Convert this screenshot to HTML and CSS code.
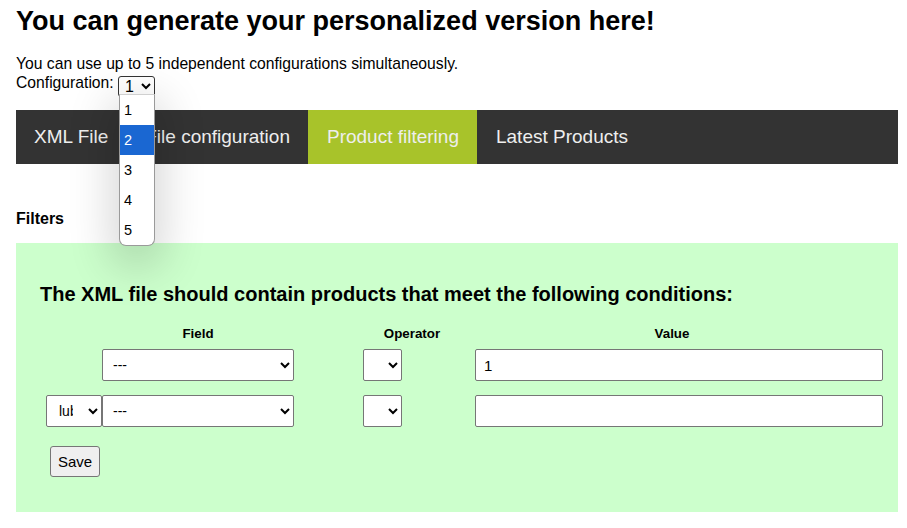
FILE: index.html
```html
<!DOCTYPE html>
<html lang="en">
<head>
  <meta charset="UTF-8" />
  <title>Personalized XML</title>
  <link rel="stylesheet" href="styles.css">
</head>
<body>
  <div class="page">
    <h1 class="title">You can generate your personalized version here!</h1>

    <div class="intro">
      You can use up to 5 independent configurations simultaneously.<br>
      Configuration:
      <span class="config-picker">
        <select class="config-select">
          <option>1</option>
          <option>2</option>
          <option>3</option>
          <option>4</option>
          <option>5</option>
        </select>
        <!-- the open option list of the select -->
        <span class="config-list">
          <span class="opt">1</span>
          <span class="opt active">2</span>
          <span class="opt">3</span>
          <span class="opt">4</span>
          <span class="opt">5</span>
        </span>
      </span>
    </div>

    <ul class="tabs">
      <li>XML File</li>
      <li>File configuration</li>
      <li class="current">Product filtering</li>
      <li>Latest Products</li>
    </ul>

    <h4 class="section-label">Filters</h4>

    <div class="filter-panel">
      <h3 class="filter-title">The XML file should contain products that meet the following conditions:</h3>

      <div class="filter-grid">
        <div class="head col-field">Field</div>
        <div class="head col-op">Operator</div>
        <div class="head col-value">Value</div>

        <div class="col-join"></div>
        <div class="col-field">
          <select class="field-select"><option>---</option></select>
        </div>
        <div class="col-op">
          <select class="op-select"><option></option></select>
        </div>
        <div class="col-value">
          <input class="value-input" type="text" value="1">
        </div>

        <div class="col-join">
          <select class="join-select"><option>lub</option></select>
        </div>
        <div class="col-field">
          <select class="field-select"><option>---</option></select>
        </div>
        <div class="col-op">
          <select class="op-select"><option></option></select>
        </div>
        <div class="col-value">
          <input class="value-input" type="text" value="">
        </div>
      </div>

      <button class="save-btn">Save</button>
    </div>
  </div>
</body>
</html>
```

FILE: styles.css
```css
body {
  margin: 0;
  background: #fff;
  color: #000;
  font-family: "Liberation Sans", Arial, sans-serif;
}

.page {
  padding: 0 9px 0 16px;
}

.title {
  margin: 0;
  padding-top: 6px;
  font-size: 27px;
  line-height: 31px;
}

.intro {
  margin: 17px 0 13px;
  font-size: 15.7px;
  line-height: 19px;
}

.config-picker {
  position: relative;
  display: inline-block;
}

.config-select {
  width: 37px;
  height: 21px;
  font-family: "Liberation Sans", Arial, sans-serif;
  font-size: 16px;
  padding: 0 0 0 2px;
  border: 1px solid #333;
  border-radius: 3px;
  background: #fff;
  vertical-align: -4px;
}

.config-list {
  position: absolute;
  top: 21px;
  left: 1px;
  width: 34px;
  display: flex;
  flex-direction: column;
  background: #fff;
  border: 1px solid #9a9a9a;
  border-top-color: #d0d0d0;
  border-radius: 0 0 7px 7px;
  box-shadow: 0 14px 44px 8px rgba(0, 0, 0, 0.16);
  z-index: 5;
  font-size: 14.5px;
}

.config-list .opt {
  height: 30px;
  line-height: 30px;
  padding-left: 4px;
}

.config-list .opt.active {
  background: #1a67d2;
  color: #fff;
}

.tabs {
  display: flex;
  margin: 0;
  padding: 0;
  list-style: none;
  background: #333;
}

.tabs li {
  padding: 16px 18px 16px 19px;
  font-size: 19px;
  line-height: 22px;
  color: #eee;
}

.tabs li:first-child {
  padding-left: 18px;
}

.tabs li.current {
  background: #a8c32a;
}

.section-label {
  margin: 46px 0 15px;
  font-size: 16px;
  line-height: 18px;
}

.filter-panel {
  background: #ccffcc;
  padding: 40px 24px 35px;
}

.filter-title {
  margin: 0 0 20px;
  font-size: 20px;
  line-height: 23px;
}

.filter-grid {
  display: grid;
  grid-template-columns: 56px 192px 69px 98px 422px;
  row-gap: 14px;
  margin-left: 6px;
  font-size: 13.33px;
}

.filter-grid .head {
  font-weight: bold;
  text-align: center;
  line-height: 15px;
  margin-bottom: -6px;
}

.col-join { grid-column: 1; }
.col-field { grid-column: 2; }
.col-op { grid-column: 4; }
.col-value { grid-column: 5; text-align: right; }

.filter-grid select,
.value-input {
  box-sizing: border-box;
  height: 32px;
  font-family: "Liberation Sans", Arial, sans-serif;
  font-size: 14px;
  border: 1px solid #767676;
  border-radius: 2px;
  background: #fff;
  color: #000;
}

.field-select {
  width: 192px;
  padding-left: 6px;
}

.op-select {
  width: 39px;
}

.join-select {
  width: 56px;
  padding: 0 12px 0 8px;
  font-size: 15px;
}

.value-input {
  width: 408px;
  padding: 0 8px;
  font-size: 15px;
}

.save-btn {
  margin: 19px 0 0 10px;
  height: 31px;
  padding: 0 7px;
  font-family: "Liberation Sans", Arial, sans-serif;
  font-size: 15px;
  background: #efefef;
  border: 1px solid #767676;
  border-radius: 3px;
  color: #000;
}
```
